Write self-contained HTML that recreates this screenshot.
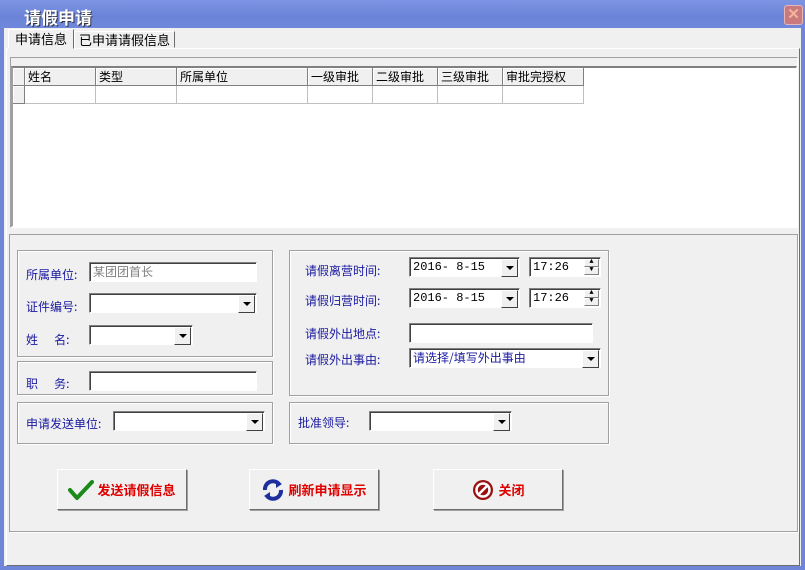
<!DOCTYPE html>
<html><head><meta charset="utf-8"><style>
*{margin:0;padding:0;box-sizing:border-box}
body{width:805px;height:570px;overflow:hidden;background:#6f86d8;font-family:"Liberation Sans","SimSun","Noto Sans CJK SC",sans-serif;font-size:12px;position:relative}
.a{position:absolute}
#title{left:0;top:0;width:805px;height:28px;background:linear-gradient(#7d95e3,#6a83d8 60%,#6f88da)}
#title span{position:absolute;left:24px;top:4px;color:#fff;font-size:17px;font-weight:bold;font-family:"Noto Sans CJK SC",sans-serif;text-shadow:1px 1px 0 #334}
#close{left:784px;top:5px;width:19px;height:20px;background:#c97a7e;border:1px solid #e9b6b6;border-radius:3px;color:#f3b49a;font-size:15px;text-align:center;line-height:17px;font-weight:bold}
#body{left:4px;top:28px;width:797px;height:538px;background:#f0f0f0}
.sunk{border:1px solid;border-color:#a0a0a0 #fff #fff #a0a0a0}
.grp{border:1px solid #a0a0a0;box-shadow:1px 1px 0 #fff, inset 1px 1px 0 #fff}
.in{background:#fff;border:1px solid;border-color:#808080 #fff #fff #808080;box-shadow:inset 1px 1px 0 #404040;height:20px;font-size:12px;line-height:18px;padding-left:3px;font-family:"Liberation Mono","Noto Sans CJK SC",monospace}
.dd::after{content:"";position:absolute;right:1px;top:1px;width:15px;height:16px;background:#f0f0f0;border:1px solid;border-color:#fff #404040 #404040 #fff}
.arr{position:absolute;right:5px;top:8px;width:0;height:0;border-left:4px solid transparent;border-right:4px solid transparent;border-top:4px solid #000;z-index:2}
.spin{position:absolute;right:1px;width:15px;height:8px;background:#f0f0f0;border:1px solid;border-color:#fff #808080 #808080 #fff;font-size:7px;line-height:5px;text-align:center;color:#000}
.lb{color:#1a1aa0;font-size:12px;font-family:"Noto Sans CJK SC",sans-serif}
.btn{background:#f0f0f0;border:1px solid;border-color:#fff #6d6d6d #6d6d6d #fff;box-shadow:1px 1px 0 #a0a0a0;height:41px;width:130px;color:#e00000;font-weight:bold;font-size:13px;font-family:"Noto Sans CJK SC",sans-serif;display:flex;align-items:center;justify-content:center;gap:3px}
.th{position:absolute;top:0;height:18px;border-right:1px solid #808080;border-bottom:1px solid #808080;background:#f0f0f0;box-shadow:inset 1px 1px 0 #fff;padding-left:3px;line-height:17px;font-family:"Noto Sans CJK SC",sans-serif}
.td{position:absolute;top:18px;height:18px;border-right:1px solid #c0c0c0;border-bottom:1px solid #c0c0c0;background:#fff}
</style></head><body>
<div id="title" class="a"><span>请假申请</span></div>
<div id="close" class="a">✕</div>
<div id="body" class="a">
 <div class="a" style="left:4px;top:1px;width:66px;height:20px;border:1px solid;border-color:#fff #6d6d6d transparent #fff;background:#f0f0f0;z-index:2;font-family:'Noto Sans CJK SC',sans-serif;font-size:13px;padding-left:6px;line-height:18px">申请信息</div>
 <div class="a" style="left:70px;top:3px;width:101px;height:17px;border:1px solid;border-color:#fff #6d6d6d transparent #fff;font-family:'Noto Sans CJK SC',sans-serif;font-size:13px;padding-left:4px;line-height:16px">已申请请假信息</div>
 <div class="a" style="left:2px;top:20px;width:794px;height:518px;border:1px solid;border-color:#fff #6d6d6d #6d6d6d #fff"></div>
 <div class="a" style="left:6px;top:29px;width:788px;height:171px;border:1px solid;border-color:#a0a0a0 #fff #fff #a0a0a0"></div>
 <div class="a sunk" style="left:7px;top:38px;width:786px;height:161px;background:#fff;overflow:hidden;border-top:2px solid #808080;border-left:2px solid #a0a0a0">
  <div class="th" style="left:0;width:12px"></div>
  <div class="th" style="left:12px;width:71px">姓名</div>
  <div class="th" style="left:83px;width:81px">类型</div>
  <div class="th" style="left:164px;width:131px">所属单位</div>
  <div class="th" style="left:295px;width:65px">一级审批</div>
  <div class="th" style="left:360px;width:65px">二级审批</div>
  <div class="th" style="left:425px;width:65px">三级审批</div>
  <div class="th" style="left:490px;width:81px">审批完授权</div>
  <div class="th" style="left:0;top:18px;width:12px"></div>
  <div class="td" style="left:12px;width:71px"></div><div class="td" style="left:83px;width:81px"></div><div class="td" style="left:164px;width:131px"></div><div class="td" style="left:295px;width:65px"></div><div class="td" style="left:360px;width:65px"></div><div class="td" style="left:425px;width:65px"></div><div class="td" style="left:490px;width:81px"></div>
 </div>
 <div class="a" style="left:5px;top:206px;width:789px;height:298px;border:1px solid #a0a0a0;box-shadow:1px 1px 0 #fff"></div>
 <div class="a grp" style="left:13px;top:222px;width:256px;height:107px"></div>
 <div class="a grp" style="left:13px;top:333px;width:256px;height:34px"></div>
 <div class="a grp" style="left:13px;top:374px;width:256px;height:42px"></div>
 <div class="a grp" style="left:285px;top:222px;width:320px;height:146px"></div>
 <div class="a grp" style="left:285px;top:374px;width:320px;height:42px"></div>

 <div class="a lb" style="left:22px;top:238px">所属单位:</div>
 <div class="a in" style="left:85px;top:234px;width:168px;color:#808080;font-family:'Noto Sans CJK SC',sans-serif">某团团首长</div>
 <div class="a lb" style="left:22px;top:270px">证件编号:</div>
 <div class="a in dd" style="left:85px;top:265px;width:168px"><i class="arr"></i></div>
 <div class="a lb" style="left:22px;top:303px">姓&nbsp;&nbsp;&nbsp;&nbsp;&nbsp;&nbsp;名:</div>
 <div class="a in dd" style="left:85px;top:297px;width:104px"><i class="arr"></i></div>
 <div class="a lb" style="left:22px;top:347px">职&nbsp;&nbsp;&nbsp;&nbsp;&nbsp;&nbsp;务:</div>
 <div class="a in" style="left:85px;top:343px;width:168px"></div>
 <div class="a lb" style="left:22px;top:387px">申请发送单位:</div>
 <div class="a in dd" style="left:109px;top:383px;width:152px"><i class="arr"></i></div>

 <div class="a lb" style="left:301px;top:234px">请假离营时间:</div>
 <div class="a in dd" style="left:405px;top:229px;width:111px">2016- 8-15<i class="arr"></i></div>
 <div class="a in" style="left:525px;top:229px;width:72px">17:26<span class="spin" style="top:1px">▲</span><span class="spin" style="top:9px">▼</span></div>
 <div class="a lb" style="left:301px;top:264px">请假归营时间:</div>
 <div class="a in dd" style="left:405px;top:260px;width:111px">2016- 8-15<i class="arr"></i></div>
 <div class="a in" style="left:525px;top:260px;width:72px">17:26<span class="spin" style="top:1px">▲</span><span class="spin" style="top:9px">▼</span></div>
 <div class="a lb" style="left:301px;top:297px">请假外出地点:</div>
 <div class="a in" style="left:405px;top:295px;width:184px"></div>
 <div class="a lb" style="left:301px;top:323px">请假外出事由:</div>
 <div class="a in dd" style="left:405px;top:320px;width:192px;color:#1a1aa0;font-family:'Noto Sans CJK SC',sans-serif">请选择/填写外出事由<i class="arr"></i></div>
 <div class="a lb" style="left:294px;top:386px">批准领导:</div>
 <div class="a in dd" style="left:365px;top:383px;width:143px"><i class="arr"></i></div>

 <div class="a btn" style="left:53px;top:441px">
  <svg width="26" height="22" viewBox="0 0 26 22"><path d="M2 11 L9 19 L24 3" fill="none" stroke="#1a8a1a" stroke-width="4" stroke-linecap="round" stroke-linejoin="round"/></svg>发送请假信息</div>
 <div class="a btn" style="left:245px;top:441px">
  <svg width="24" height="24" viewBox="0 0 24 24"><path d="M4 12 A8 8 0 0 1 18 6" fill="none" stroke="#1c2f9c" stroke-width="4"/><path d="M15 2 L21 6 L15 10Z" fill="#1c2f9c"/><path d="M20 12 A8 8 0 0 1 6 18" fill="none" stroke="#1c2f9c" stroke-width="4"/><path d="M9 22 L3 18 L9 14Z" fill="#1c2f9c"/></svg>刷新申请显示</div>
 <div class="a btn" style="left:429px;top:441px">
  <svg width="24" height="24" viewBox="0 0 24 24"><circle cx="12" cy="12" r="10" fill="#9a1010"/><circle cx="12" cy="12" r="6.5" fill="none" stroke="#fff" stroke-width="2.5"/><path d="M7.5 16.5 L16.5 7.5" stroke="#fff" stroke-width="2.5"/></svg>关闭</div>
</div>
</body></html>
